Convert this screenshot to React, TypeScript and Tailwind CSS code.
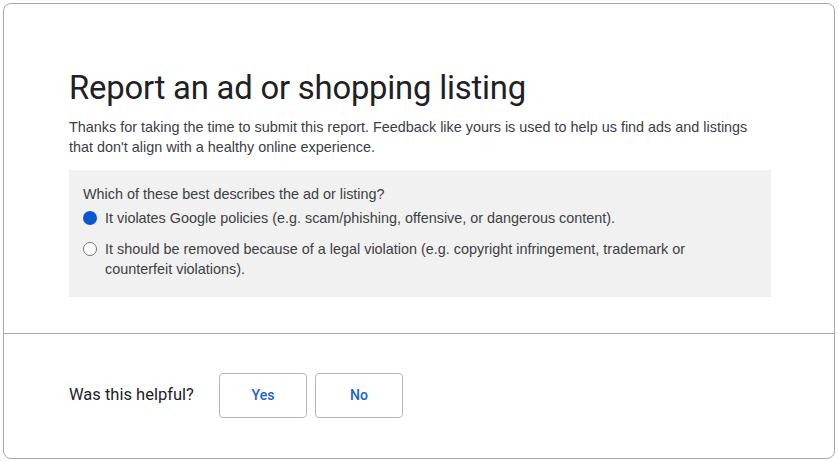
const Radio = ({ checked }: { checked?: boolean }) =>
  checked ? (
    <span className="mt-[3px] h-[14px] w-[14px] shrink-0 rounded-full bg-[#0b57d0]" />
  ) : (
    <span className="mt-[3px] h-[14px] w-[14px] shrink-0 rounded-full border border-[#757575] bg-white" />
  )

const App = () => {
  return (
    <div className="p-[3px] bg-white">
      <div className="rounded-lg border border-[#a8a8a8] bg-white">
        <div className="pl-[65px] pt-[64px] pb-[36px] border-b border-[#a8a8a8]">
          <h1 className="text-[32.8px] leading-[40px] text-[#202124] font-['Roboto',sans-serif] tracking-[-0.2px]">
            Report an ad or shopping listing
          </h1>
          <p className="mt-[9px] w-[690px] text-[14.4px] leading-[20px] text-[#3c4043] font-['Liberation_Sans',Arial,sans-serif]">
            Thanks for taking the time to submit this report. Feedback like yours is used to help us find ads and listings
            that don't align with a healthy online experience.
          </p>
          <div className="mt-[13px] w-[702px] bg-[#f1f1f1] pl-[14px] pr-4 pt-[14px] pb-[18px] text-[14.4px] leading-[20px] text-[#3c4043] font-['Liberation_Sans',Arial,sans-serif]">
            <div>Which of these best describes the ad or listing?</div>
            <label className="mt-[4px] flex gap-[8px]">
              <Radio checked />
              <span>It violates Google policies (e.g. scam/phishing, offensive, or dangerous content).</span>
            </label>
            <label className="mt-[11px] flex gap-[8px]">
              <Radio />
              <span className="w-[600px]">
                It should be removed because of a legal violation (e.g. copyright infringement, trademark or counterfeit
                violations).
              </span>
            </label>
          </div>
        </div>
        <div className="flex items-center pl-[65px] pt-[39px] pb-[40px]">
          <span className="w-[150px] text-[16.5px] text-[#202124] font-['Roboto',sans-serif]">Was this helpful?</span>
          <div className="flex gap-[8px]">
            <button className="h-[45px] w-[88px] rounded border border-[#b5b5b5] bg-white text-[14px] font-medium text-[#1a62d0] font-['Roboto',sans-serif]">
              Yes
            </button>
            <button className="h-[45px] w-[88px] rounded border border-[#b5b5b5] bg-white text-[14px] font-medium text-[#1a62d0] font-['Roboto',sans-serif]">
              No
            </button>
          </div>
        </div>
      </div>
    </div>
  )
}

export default App
